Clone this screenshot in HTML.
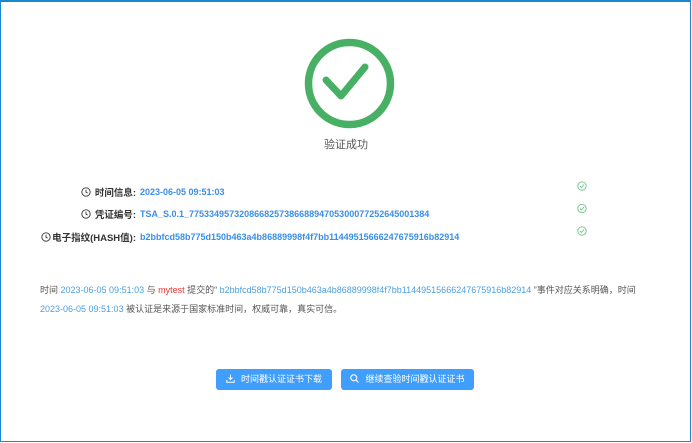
<!DOCTYPE html>
<html><head><meta charset="utf-8"><style>
*{margin:0;padding:0;box-sizing:border-box}
body{width:692px;height:443px;background:#fff;font-family:"Liberation Sans","Noto Sans CJK SC",sans-serif;position:relative;overflow:hidden}
.frame{position:absolute;left:0;top:0;width:691px;height:442px;border:1px solid #1a87d0;border-top-width:2px}
.abs{position:absolute;white-space:nowrap}
.lbl{font-size:9.5px;line-height:12px;font-weight:bold;color:#333;right:556px}
.val{font-size:9px;line-height:12px;font-weight:bold;color:#3a8ee6}
.p{font-size:9px;line-height:12px;color:#555}
.b{color:#4a9fe0}.r{color:#e33}
.btn{position:absolute;top:369px;height:21px;background:#409eff;border-radius:3px;color:#fff;font-size:9px;line-height:21px;text-align:center}
</style></head><body>
<div class="frame"></div>
<svg class="abs" style="left:300px;top:35px" width="100" height="100" viewBox="300 35 100 100">
<circle cx="349.5" cy="83.5" r="41" fill="none" stroke="#48b064" stroke-width="7.5"/>
<path d="M326 80 L341 96 L365 67" fill="none" stroke="#48b064" stroke-width="7" stroke-linecap="round" stroke-linejoin="round"/>
</svg>
<div class="abs" style="left:324px;top:136px;font-size:11px;color:#555">验证成功</div>

<svg class="abs" style="left:81px;top:187px" width="10" height="10" viewBox="0 0 11 11"><circle cx="5.5" cy="5.5" r="4.6" fill="none" stroke="#333" stroke-width="1"/><path d="M5.5 3v2.7l1.8 1" fill="none" stroke="#333"/></svg>
<div class="abs lbl" style="top:188px">时间信息:</div>
<div class="abs val" style="left:140px;top:186px">2023-06-05 09:51:03</div>

<svg class="abs" style="left:81px;top:209px" width="10" height="10" viewBox="0 0 11 11"><circle cx="5.5" cy="5.5" r="4.6" fill="none" stroke="#333" stroke-width="1"/><path d="M5.5 3v2.7l1.8 1" fill="none" stroke="#333"/></svg>
<div class="abs lbl" style="top:210px">凭证编号:</div>
<div class="abs val" style="left:140px;top:208px">TSA_S.0.1_775334957320866825738668894705300077252645001384</div>

<svg class="abs" style="left:41px;top:232px" width="10" height="10" viewBox="0 0 11 11"><circle cx="5.5" cy="5.5" r="4.6" fill="none" stroke="#333" stroke-width="1"/><path d="M5.5 3v2.7l1.8 1" fill="none" stroke="#333"/></svg>
<div class="abs lbl" style="top:233px">电子指纹(HASH值):</div>
<div class="abs val" style="left:140px;top:231px">b2bbfcd58b775d150b463a4b86889998f4f7bb11449515666247675916b82914</div>

<svg class="abs" style="left:577px;top:181px" width="10" height="56" viewBox="0 0 10 56">
<g fill="none" stroke="#6cc28a" stroke-width="0.9"><circle cx="5" cy="5" r="4.2"/><path d="M3 5l1.5 1.5 2.5-3"/>
<circle cx="5" cy="27.5" r="4.2"/><path d="M3 27.5l1.5 1.5 2.5-3"/>
<circle cx="5" cy="50" r="4.2"/><path d="M3 50l1.5 1.5 2.5-3"/></g></svg>

<div class="abs p" style="left:40px;top:284px">时间 <span class="b">2023-06-05 09:51:03</span> 与 <span class="r">mytest</span> 提交的“ <span class="b">b2bbfcd58b775d150b463a4b86889998f4f7bb11449515666247675916b82914</span> ”事件对应关系明确，时间</div>
<div class="abs p" style="left:40px;top:303px"><span class="b">2023-06-05 09:51:03</span> 被认证是来源于国家标准时间，权威可靠，真实可信。</div>

<div class="btn" style="left:216px;width:116px"><svg width="9" height="9" viewBox="0 0 9 9" style="vertical-align:-1px;margin-right:6px"><path d="M4.5 0.5v5M2.5 3.5l2 2 2-2M0.8 6v2.2h7.4V6" fill="none" stroke="#fff" stroke-width="1"/></svg>时间戳认证证书下载</div>
<div class="btn" style="left:341px;width:133px"><svg width="9" height="9" viewBox="0 0 9 9" style="vertical-align:-1px;margin-right:6px"><circle cx="3.8" cy="3.8" r="3" fill="none" stroke="#fff" stroke-width="1.1"/><path d="M6 6l2.5 2.5" stroke="#fff" stroke-width="1.1"/></svg>继续查验时间戳认证证书</div>
</body></html>
